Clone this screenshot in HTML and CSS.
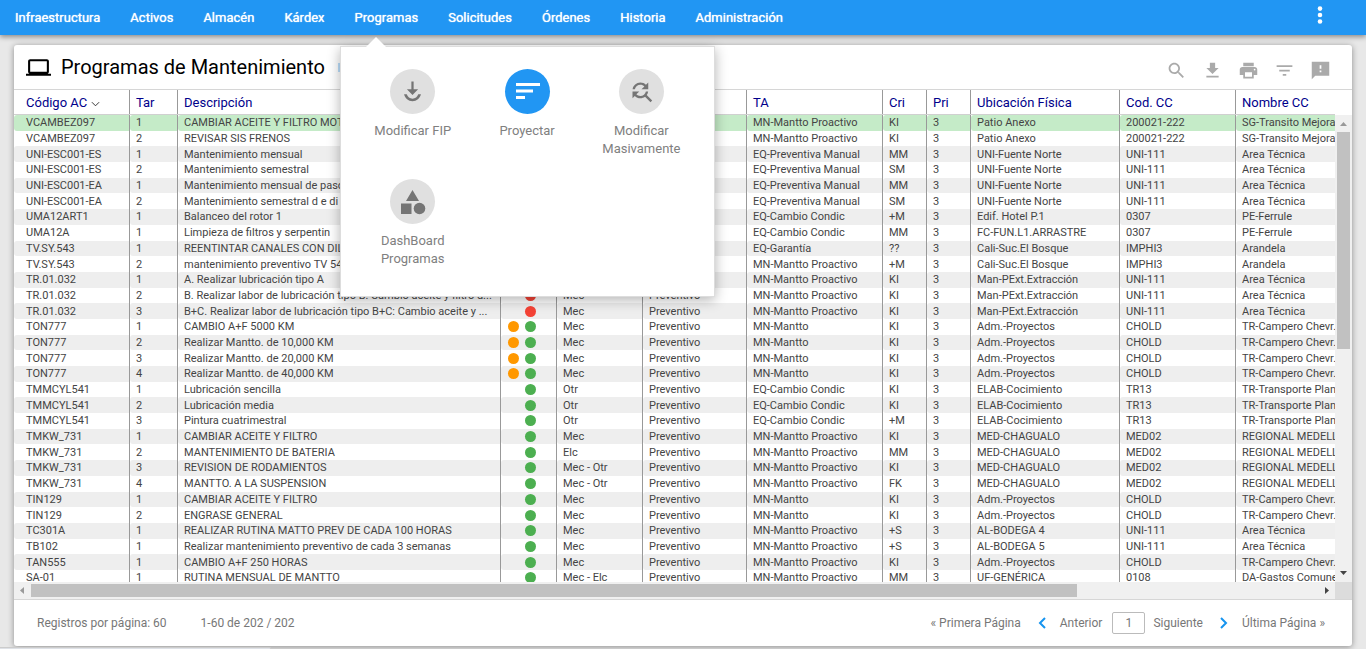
FILE: index.html
```html
<!DOCTYPE html>
<html lang="es">
<head>
<meta charset="utf-8">
<title>Programas de Mantenimiento</title>
<link rel="stylesheet" href="styles.css">
</head>
<body>
<header class="topbar">
  <nav class="nav">
    <a href="#">Infraestructura</a>
    <a href="#">Activos</a>
    <a href="#">Almacén</a>
    <a href="#">Kárdex</a>
    <div class="nav-group">
      <a href="#">Programas</a>
      <div class="menu">
        <a class="tile" href="#"><span class="disc"><svg viewBox="0 0 24 24"><path d="M12 15l5-5h-4V3h-2v7H7z"/><path d="M19.5 14.5h-2.4c-.8 2.300-2.700 3.900-5.100 3.900s-4.300-1.600-5.100-3.900H4.500c.9 3.700 3.800 6.200 7.500 6.200s6.600-2.500 7.500-6.200z"/></svg></span>Modificar FIP</a>
        <a class="tile" href="#"><span class="disc active"><svg viewBox="0 0 27 27"><path d="M2 5h24v3H2zM2 11.500h17v3H2zM2 18h9v3H2z"/></svg></span>Proyectar</a>
        <a class="tile" href="#"><span class="disc"><svg viewBox="0 0 24 24"><path d="M11 6c1.380 0 2.630.56 3.540 1.460L12 10h6V4l-2.050 2.050C14.680 4.780 12.930 4 11 4c-3.530 0-6.430 2.610-6.920 6H6.100c.46-2.280 2.480-4 4.900-4zm5.640 9.140c.66-.9 1.120-1.970 1.280-3.140H15.900c-.46 2.280-2.480 4-4.900 4-1.380 0-2.630-.56-3.540-1.460L10 12H4v6l2.050-2.050C7.320 17.220 9.070 18 11 18c1.550 0 2.980-.51 4.140-1.360L20 21.490 21.490 20l-4.850-4.860z"/></svg></span>Modificar Masivamente</a>
        <a class="tile" href="#"><span class="disc"><svg viewBox="0 0 27 27"><path d="M13.500 2l6.500 11H7zM2 15.500h10.500V26H2z"/><circle cx="20.500" cy="20.500" r="5.800"/></svg></span>DashBoard Programas</a>
      </div>
    </div>
    <a href="#">Solicitudes</a>
    <a href="#">Órdenes</a>
    <a href="#">Historia</a>
    <a href="#">Administración</a>
  </nav>
  <button class="more" type="button" aria-label="Más opciones"><svg viewBox="0 0 24 24"><circle cx="12" cy="5" r="2.500"/><circle cx="12" cy="12" r="2.500"/><circle cx="12" cy="19" r="2.500"/></svg></button>
</header>

<main class="card">
  <div class="card-head">
    <svg class="laptop" viewBox="0 0 24 24"><path d="M20 18c1.100 0 1.990-.9 1.990-2L22 6c0-1.100-.9-2-2-2H4c-1.100 0-2 .9-2 2v10c0 1.100.9 2 2 2H0v2h24v-2h-4zM4 6h16v10H4V6z"/></svg>
    <h1>Programas de Mantenimiento</h1>
    <span class="tag"></span>
    <div class="tools">
      <button type="button" aria-label="Buscar"><svg viewBox="0 0 24 24"><path d="M15.500 14h-.79l-.28-.27C15.410 12.590 16 11.110 16 9.500 16 5.910 13.090 3 9.500 3S3 5.910 3 9.500 5.910 16 9.500 16c1.610 0 3.090-.59 4.230-1.570l.27.28v.79l5 4.990L20.490 19l-4.990-5zm-6 0C7.010 14 5 11.990 5 9.500S7.010 5 9.500 5 14 7.010 14 9.500 11.990 14 9.500 14z"/></svg></button>
      <button type="button" aria-label="Descargar"><svg viewBox="0 0 24 24"><path d="M19 9h-4V3H9v6H5l7 7 7-7zM5 18v2h14v-2H5z"/></svg></button>
      <button type="button" aria-label="Imprimir"><svg viewBox="0 0 24 24"><path d="M19 8H5c-1.660 0-3 1.340-3 3v6h4v4h12v-4h4v-6c0-1.660-1.340-3-3-3zm-3 11H8v-5h8v5zm3-7c-.55 0-1-.45-1-1s.45-1 1-1 1 .45 1 1-.45 1-1 1zm-1-9H6v4h12V3z"/></svg></button>
      <button type="button" aria-label="Filtrar"><svg viewBox="0 0 24 24"><path d="M10 18h4v-2h-4v2zM3 6v2h18V6H3zm3 7h12v-2H6v2z"/></svg></button>
      <button type="button" aria-label="Comentarios"><svg viewBox="0 0 24 24"><path d="M22 2H2v20l4-4h16zM13 14h-2v-2h2v2zm0-4h-2V6h2v4z"/></svg></button>
    </div>
  </div>

  <div class="grid">
    <div class="grid-head">
      <table class="data">
        <colgroup><col class="c-code"><col class="c-tar"><col class="c-desc"><col class="c-state"><col class="c-spec"><col class="c-type"><col class="c-ta"><col class="c-cri"><col class="c-cri"><col class="c-place"><col class="c-cc"><col class="c-name"></colgroup>
        <thead><tr><th>Código AC<svg class="sort" viewBox="0 0 10 6"><path d="M1 1l4 4 4-4"/></svg></th><th>Tar</th><th>Descripción</th><th></th><th></th><th></th><th>TA</th><th>Cri</th><th>Pri</th><th>Ubicación Física</th><th>Cod. CC</th><th>Nombre CC</th></tr></thead>
      </table>
    </div>
    <div class="grid-body">
      <table class="data rows">
        <colgroup><col class="c-code"><col class="c-tar"><col class="c-desc"><col class="c-state"><col class="c-spec"><col class="c-type"><col class="c-ta"><col class="c-cri"><col class="c-cri"><col class="c-place"><col class="c-cc"><col class="c-name"></colgroup>
        <tbody>
        <tr class="selected"><td>VCAMBEZ097<td>1<td>CAMBIAR ACEITE Y FILTRO MOTOR<td><td><td><td>MN-Mantto Proactivo<td>KI<td>3<td>Patio Anexo<td>200021-222<td>SG-Transito Mejorado</tr>
        <tr><td>VCAMBEZ097<td>2<td>REVISAR SIS FRENOS<td><td><td><td>MN-Mantto Proactivo<td>KI<td>3<td>Patio Anexo<td>200021-222<td>SG-Transito Mejorado</tr>
        <tr><td>UNI-ESC001-ES<td>1<td>Mantenimiento mensual<td><td><td><td>EQ-Preventiva Manual<td>MM<td>3<td>UNI-Fuente Norte<td>UNI-111<td>Area Técnica</tr>
        <tr><td>UNI-ESC001-ES<td>2<td>Mantenimiento semestral<td><td><td><td>EQ-Preventiva Manual<td>SM<td>3<td>UNI-Fuente Norte<td>UNI-111<td>Area Técnica</tr>
        <tr><td>UNI-ESC001-EA<td>1<td>Mantenimiento mensual de paso<td><td><td><td>EQ-Preventiva Manual<td>MM<td>3<td>UNI-Fuente Norte<td>UNI-111<td>Area Técnica</tr>
        <tr><td>UNI-ESC001-EA<td>2<td>Mantenimiento semestral d e di<td><td><td><td>EQ-Preventiva Manual<td>SM<td>3<td>UNI-Fuente Norte<td>UNI-111<td>Area Técnica</tr>
        <tr><td>UMA12ART1<td>1<td>Balanceo del rotor 1<td><td><td><td>EQ-Cambio Condic<td>+M<td>3<td>Edif. Hotel P.1<td>0307<td>PE-Ferrule</tr>
        <tr><td>UMA12A<td>1<td>Limpieza de filtros y serpentin<td><td><td><td>EQ-Cambio Condic<td>MM<td>3<td>FC-FUN.L1.ARRASTRE<td>0307<td>PE-Ferrule</tr>
        <tr><td>TV.SY.543<td>1<td>REENTINTAR CANALES CON DIL<td><td><td><td>EQ-Garantía<td>??<td>3<td>Cali-Suc.El Bosque<td>IMPHI3<td>Arandela</tr>
        <tr><td>TV.SY.543<td>2<td>mantenimiento preventivo TV 543<td><td><td><td>MN-Mantto Proactivo<td>+M<td>3<td>Cali-Suc.El Bosque<td>IMPHI3<td>Arandela</tr>
        <tr><td>TR.01.032<td>1<td>A. Realizar lubricación tipo A<td><td><td><td>MN-Mantto Proactivo<td>KI<td>3<td>Man-PExt.Extracción<td>UNI-111<td>Area Técnica</tr>
        <tr><td>TR.01.032<td>2<td>B. Realizar labor de lubricación tipo B: Cambio aceite y filtro d...<td><i class="dot red"></i><td>Mec<td>Preventivo<td>MN-Mantto Proactivo<td>KI<td>3<td>Man-PExt.Extracción<td>UNI-111<td>Area Técnica</tr>
        <tr><td>TR.01.032<td>3<td>B+C. Realizar labor de lubricación tipo B+C: Cambio aceite y ...<td><i class="dot red"></i><td>Mec<td>Preventivo<td>MN-Mantto Proactivo<td>KI<td>3<td>Man-PExt.Extracción<td>UNI-111<td>Area Técnica</tr>
        <tr><td>TON777<td>1<td>CAMBIO A+F 5000 KM<td><i class="dot orange"></i><i class="dot"></i><td>Mec<td>Preventivo<td>MN-Mantto<td>KI<td>3<td>Adm.-Proyectos<td>CHOLD<td>TR-Campero Chevr.</tr>
        <tr><td>TON777<td>2<td>Realizar Mantto. de 10,000 KM<td><i class="dot orange"></i><i class="dot"></i><td>Mec<td>Preventivo<td>MN-Mantto<td>KI<td>3<td>Adm.-Proyectos<td>CHOLD<td>TR-Campero Chevr.</tr>
        <tr><td>TON777<td>3<td>Realizar Mantto. de 20,000 KM<td><i class="dot orange"></i><i class="dot"></i><td>Mec<td>Preventivo<td>MN-Mantto<td>KI<td>3<td>Adm.-Proyectos<td>CHOLD<td>TR-Campero Chevr.</tr>
        <tr><td>TON777<td>4<td>Realizar Mantto. de 40,000 KM<td><i class="dot orange"></i><i class="dot"></i><td>Mec<td>Preventivo<td>MN-Mantto<td>KI<td>3<td>Adm.-Proyectos<td>CHOLD<td>TR-Campero Chevr.</tr>
        <tr><td>TMMCYL541<td>1<td>Lubricación sencilla<td><i class="dot"></i><td>Otr<td>Preventivo<td>EQ-Cambio Condic<td>KI<td>3<td>ELAB-Cocimiento<td>TR13<td>TR-Transporte Planta</tr>
        <tr><td>TMMCYL541<td>2<td>Lubricación media<td><i class="dot"></i><td>Otr<td>Preventivo<td>EQ-Cambio Condic<td>KI<td>3<td>ELAB-Cocimiento<td>TR13<td>TR-Transporte Planta</tr>
        <tr><td>TMMCYL541<td>3<td>Pintura cuatrimestral<td><i class="dot"></i><td>Otr<td>Preventivo<td>EQ-Cambio Condic<td>+M<td>3<td>ELAB-Cocimiento<td>TR13<td>TR-Transporte Planta</tr>
        <tr><td>TMKW_731<td>1<td>CAMBIAR ACEITE Y FILTRO<td><i class="dot"></i><td>Mec<td>Preventivo<td>MN-Mantto Proactivo<td>KI<td>3<td>MED-CHAGUALO<td>MED02<td>REGIONAL MEDELLIN</tr>
        <tr><td>TMKW_731<td>2<td>MANTENIMIENTO DE BATERIA<td><i class="dot"></i><td>Elc<td>Preventivo<td>MN-Mantto Proactivo<td>MM<td>3<td>MED-CHAGUALO<td>MED02<td>REGIONAL MEDELLIN</tr>
        <tr><td>TMKW_731<td>3<td>REVISION DE RODAMIENTOS<td><i class="dot"></i><td>Mec - Otr<td>Preventivo<td>MN-Mantto Proactivo<td>KI<td>3<td>MED-CHAGUALO<td>MED02<td>REGIONAL MEDELLIN</tr>
        <tr><td>TMKW_731<td>4<td>MANTTO. A LA SUSPENSION<td><i class="dot"></i><td>Mec - Otr<td>Preventivo<td>MN-Mantto Proactivo<td>FK<td>3<td>MED-CHAGUALO<td>MED02<td>REGIONAL MEDELLIN</tr>
        <tr><td>TIN129<td>1<td>CAMBIAR ACEITE Y FILTRO<td><i class="dot"></i><td>Mec<td>Preventivo<td>MN-Mantto<td>KI<td>3<td>Adm.-Proyectos<td>CHOLD<td>TR-Campero Chevr.</tr>
        <tr><td>TIN129<td>2<td>ENGRASE GENERAL<td><i class="dot"></i><td>Mec<td>Preventivo<td>MN-Mantto<td>KI<td>3<td>Adm.-Proyectos<td>CHOLD<td>TR-Campero Chevr.</tr>
        <tr><td>TC301A<td>1<td>REALIZAR RUTINA MATTO PREV DE CADA 100 HORAS<td><i class="dot"></i><td>Mec<td>Preventivo<td>MN-Mantto Proactivo<td>+S<td>3<td>AL-BODEGA 4<td>UNI-111<td>Area Técnica</tr>
        <tr><td>TB102<td>1<td>Realizar mantenimiento preventivo de cada 3 semanas<td><i class="dot"></i><td>Mec<td>Preventivo<td>MN-Mantto Proactivo<td>+S<td>3<td>AL-BODEGA 5<td>UNI-111<td>Area Técnica</tr>
        <tr><td>TAN555<td>1<td>CAMBIO A+F 250 HORAS<td><i class="dot"></i><td>Mec<td>Preventivo<td>MN-Mantto Proactivo<td>KI<td>3<td>Adm.-Proyectos<td>CHOLD<td>TR-Campero Chevr.</tr>
        <tr><td>SA-01<td>1<td>RUTINA MENSUAL DE MANTTO<td><i class="dot"></i><td>Mec - Elc<td>Preventivo<td>MN-Mantto Proactivo<td>MM<td>3<td>UF-GENÉRICA<td>0108<td>DA-Gastos Comunes</tr>
        </tbody>
      </table>
    </div>
    <div class="bar-y"><svg viewBox="0 0 17 17"><path class="dim" d="M5 11l3.500-4 3.500 4z"/></svg><span class="track"><span class="thumb"></span></span><svg viewBox="0 0 17 17"><path d="M5 6h7l-3.500 4z"/></svg></div>
    <div class="bar-x"><svg viewBox="0 0 17 17"><path class="dim" d="M10 5v7L6 8.500z"/></svg><span class="track"><span class="thumb"></span></span><svg viewBox="0 0 17 17"><path d="M7 5v7l4-3.500z"/></svg></div>
    <div class="corner"></div>
  </div>

  <footer class="pager">
    <span class="per-page">Registros por página: 60</span>
    <span>1-60 de 202 / 202</span>
    <div class="pages">
      <a href="#">« Primera Página</a>
      <a class="step prev" href="#"><svg viewBox="0 0 8 12"><path d="M7 1L2 6l5 5"/></svg>Anterior</a>
      <input type="text" value="1" aria-label="Página">
      <a class="step next" href="#">Siguiente<svg viewBox="0 0 8 12"><path d="M1 1l5 5-5 5"/></svg></a>
      <a href="#">Última Página »</a>
    </div>
  </footer>
</main>
<div class="status"></div>
</body>
</html>
```
FILE: styles.css
```css
* { box-sizing: border-box; }
html, body { height: 100%; }
body {
  margin: 0;
  display: flex;
  flex-direction: column;
  gap: 10px;
  padding-bottom: 3px;
  overflow: hidden;
  position: relative;
  background: #e8e8e8;
  color: #444;
  font-family: Roboto, sans-serif;
  font-size: 11px;
}
a { color: inherit; text-decoration: none; }
button { border: 0; padding: 0; background: none; color: inherit; }
svg { display: block; fill: currentColor; }

.topbar {
  flex: none;
  position: relative;
  z-index: 2;
  display: flex;
  justify-content: space-between;
  height: 35px;
  background: #2196f3;
  color: #fff;
  box-shadow: 0 2px 5px rgba(0, 0, 0, .4);
}
.nav { display: flex; font-size: 13px; line-height: 35px; text-shadow: 0 0 1px #fff; }
.nav > a, .nav-group > a { display: block; padding: 0 15px; }
.nav-group { position: relative; }
.more { margin: 3px 34px 9px 0; }
.more svg { width: 24px; height: 22px; }

.menu {
  position: absolute;
  top: 46px;
  left: 0;
  width: 375px;
  height: 251px;
  padding: 22px 15px;
  display: grid;
  grid-template-columns: repeat(3, 1fr);
  grid-auto-rows: 110px;
  border: 1px solid #ddd;
  background: #fff;
  box-shadow: 0 3px 12px rgba(0, 0, 0, .3);
  color: #808080;
  text-shadow: none;
}
.menu::before {
  content: "";
  position: absolute;
  top: -10px;
  left: 25px;
  border: 10px solid transparent;
  border-top: 0;
  border-bottom-color: #fff;
}
.tile {
  display: flex;
  flex-direction: column;
  align-items: center;
  gap: 8px;
  padding: 0 15px;
  text-align: center;
  line-height: 18px;
}
.disc {
  flex: none;
  display: grid;
  place-items: center;
  width: 45px;
  height: 45px;
  border-radius: 50%;
  background: #e0e0e0;
  color: #757575;
}
.disc svg { width: 27px; height: 27px; }
.disc.active { background: #2196f3; color: #fff; }

.card {
  flex: 1;
  min-height: 0;
  display: flex;
  flex-direction: column;
  margin: 0 14px;
  border-radius: 3px;
  background: #fff;
  box-shadow: 0 1px 6px rgba(0, 0, 0, .4);
}
.card-head { flex: none; display: flex; align-items: center; height: 44px; padding: 0 21px 0 12px; color: #000; }
.laptop { width: 25px; height: 25px; }
h1 { margin: 0 0 0 10px; font-size: 20px; font-weight: 400; line-height: 44px; }
.tag { width: 20px; height: 9px; margin-left: 13px; background: #bbdefb; }
.tools { display: flex; gap: 15px; margin-left: auto; padding-top: 6px; color: #aaa; }
.tools svg { width: 21px; height: 21px; }

.grid {
  flex: 1;
  min-height: 0;
  display: grid;
  grid-template-columns: 1fr 17px;
  grid-template-rows: 25px 1fr 17px;
  border-top: 1px solid #d6d6d6;
  border-bottom: 1px solid #d6d6d6;
}
.grid-head { grid-column: 1 / 3; overflow: hidden; }
.grid-body { overflow: hidden; min-width: 0; border-top: 1px solid #d0d0d0; margin-top: -1px; }
.data { table-layout: fixed; width: 1628px; border-spacing: 0; }
.rows { height: 471px; }
.data th, .data td { padding: 0 0 0 6px; border-right: 1px solid #999; text-align: left; white-space: nowrap; overflow: hidden; }
.data th:first-child, .data td:first-child { padding-left: 12px; }
.data th { height: 24px; color: #00008b; font-size: 13px; font-weight: 400; }
.data td { line-height: 15px; height: 15px; font-size: 11px; }
.data tr:nth-child(odd) td { background: #eee; background-clip: padding-box; border-radius: 3px 0 0 3px; }
.data tr.selected td { background-color: #c5ebc8; }
.c-code, .c-cc { width: 116px; }
.c-tar { width: 48px; }
.c-desc { width: 323px; }
.c-state { width: 56px; }
.c-spec { width: 86px; }
.c-type { width: 104px; }
.c-ta { width: 136px; }
.c-cri { width: 44px; }
.c-place { width: 149px; }
.sort { display: inline-block; width: 9px; height: 6px; margin-left: 4px; fill: none; stroke: #222; stroke-width: 1; }
.rows td:nth-child(4) { padding: 0 20px 0 0; text-align: right; font-size: 0; line-height: 0; }
.dot { display: inline-block; width: 11px; height: 11px; margin-left: 6px; border-radius: 50%; background: #4caf50; vertical-align: middle; }
.dot.orange { background: #ff9800; }
.dot.red { background: #f44336; }

.bar-y, .bar-x { display: flex; background: #f0f0f0; color: #444; }
.bar-y { flex-direction: column; }
.bar-y svg, .bar-x svg { flex: none; width: 17px; height: 17px; }
.dim { fill: #999; }
.track { flex: 1; display: flex; padding: 0 2px; }
.bar-x .track { padding: 2px 0; }
.thumb { flex: 1; background: #c1c1c1; }
.bar-y .thumb { height: 50%; }
.bar-x .thumb { flex: 13; }
.bar-x .track::after { content: ""; flex: 3; }
.corner { background: #dcdcdc; }

.pager {
  flex: none;
  display: flex;
  align-items: center;
  height: 46px;
  padding: 0 27px 0 23px;
  color: #777;
  font-size: 12px;
}
.per-page { margin-right: 34px; }
.pages { display: flex; align-items: center; margin-left: auto; }
.step { display: flex; align-items: center; }
.step svg { width: 8px; height: 12px; fill: none; stroke: #1694ef; stroke-width: 2; }
.prev { gap: 14px; margin-left: 17px; }
.next { gap: 17px; margin-right: 14px; }
.pages input {
  width: 33px;
  height: 22px;
  margin: 0 8px 0 10px;
  padding: 0;
  border: 1px solid #bbb;
  border-radius: 2px;
  background: #fff;
  color: #777;
  font: inherit;
  text-align: center;
}
.status { position: absolute; left: 0; bottom: 0; width: 271px; height: 2px; border-top: 1px solid #ccc; border-right: 1px solid #ccc; border-top-right-radius: 2px; background: #dee1e6; }
```
